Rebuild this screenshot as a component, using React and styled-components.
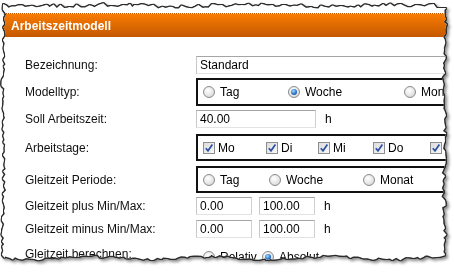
import React from 'react'
import styled, { createGlobalStyle } from 'styled-components'

// deterministic jitter so the torn edge is the same on every render
function seeded(seed) {
  let s = seed
  return () => {
    s = (s * 16807) % 2147483647
    return (s - 1) / 2147483646
  }
}

function tornPolygon() {
  const r = seeded(11)
  const pts = []
  for (let x = 3; x < 445; x += 2 + r() * 3) pts.push([x, 4 + r() * 4 + Math.sin(x / 23) * 0.8])
  for (let y = 8; y < 258; y += 2 + r() * 3) pts.push([446 - r() * 4 + Math.sin(y / 17) * 0.8, y])
  for (let x = 445; x > 4; x -= 2 + r() * 3) pts.push([x, 259 - r() * 3 + Math.sin(x / 19) * 1.6])
  for (let y = 258; y > 8; y -= 2 + r() * 3) pts.push([2 + r() * 4 + Math.sin(y / 21) * 0.8, y])
  return `polygon(${pts.map(([x, y]) => `${x.toFixed(1)}px ${y.toFixed(1)}px`).join(', ')})`
}

const TORN = tornPolygon()

const GlobalStyle = createGlobalStyle`
  html, body {
    margin: 0;
    padding: 0;
    background: #fff;
  }
  body {
    font-family: "Liberation Sans", Arial, sans-serif;
    font-size: 12px;
    color: #000;
  }
`

const Frame = styled.div`
  width: 454px;
  height: 273px;
  filter: drop-shadow(1px 0 0 #2b2b2b) drop-shadow(-1px 0 0 #2b2b2b)
    drop-shadow(0 1px 0 #2b2b2b) drop-shadow(0 -1px 0 #2b2b2b)
    drop-shadow(2px 2px 1.5px rgba(0, 0, 0, 0.45));
`

const Paper = styled.div`
  width: 454px;
  height: 273px;
  overflow: hidden;
  background: #fff;
  clip-path: ${TORN};
`

const TitleBar = styled.div`
  margin-top: 13px;
  height: 24px;
  box-sizing: border-box;
  border-top: 1px dotted #ffe2c4;
  background: linear-gradient(#f97b03, #c45800);
  color: #fff;
  font-weight: bold;
  font-size: 12px;
  padding-left: 11px;
  display: flex;
  align-items: center;
`

const Form = styled.div`
  padding: 19px 0 0 25px;
  display: flex;
  flex-direction: column;
`

const Row = styled.div`
  display: flex;
  align-items: center;
  height: ${({ $h }) => $h}px;
  margin-top: ${({ $gap }) => $gap || 0}px;
`

const Label = styled.div`
  width: 171px;
  flex: none;
  color: #111;
`

const Field = styled.input`
  box-sizing: border-box;
  height: 18px;
  width: ${({ $w }) => $w}px;
  flex: none;
  margin: 0 ${({ $mr }) => $mr || 0}px 0 0;
  padding: 0 0 0 3px;
  border: 1px solid;
  border-color: #a5a5a5 #d0d0d0 #e3e3e3 #c9c9c9;
  font-family: "Liberation Sans", Arial, sans-serif;
  font-size: 12px;
  color: #000;
  background: #fff;
  outline: none;
`

const Unit = styled.span`
  margin-left: 9px;
`

const Group = styled.div`
  box-sizing: border-box;
  width: 300px;
  height: 100%;
  flex: none;
  border: ${({ $plain }) => ($plain ? '2px solid transparent' : '2px solid #111')};
  padding-left: 5px;
  padding-top: ${({ $pt }) => $pt || 0}px;
  display: grid;
  grid-template-columns: ${({ $cols }) => $cols};
  align-items: center;
`

const Option = styled.label`
  display: flex;
  align-items: center;
  gap: ${({ $gap }) => $gap}px;
  white-space: nowrap;
`

const RadioDot = styled.span`
  box-sizing: border-box;
  width: 12px;
  height: 12px;
  border-radius: 50%;
  border: 1px solid #8a8a8a;
  background: radial-gradient(circle at 40% 35%, #ffffff 0%, #e6e6e6 55%, #c9c9c9 100%);
  display: flex;
  align-items: center;
  justify-content: center;

  &::after {
    content: '';
    display: ${({ $on }) => ($on ? 'block' : 'none')};
    width: 6px;
    height: 6px;
    border-radius: 50%;
    background: radial-gradient(circle at 40% 35%, #a6dcff 0%, #2a72c8 55%, #0d3f86 100%);
  }
`

const Box = styled.span`
  box-sizing: border-box;
  width: 12px;
  height: 12px;
  border: 1px solid #8e8f8f;
  background: linear-gradient(135deg, #dcdcdc, #f8f8f8);
  display: flex;
  align-items: center;
  justify-content: center;
`

function Radio({ on, children }) {
  return (
    <Option $gap={5}>
      <RadioDot $on={on} />
      {children}
    </Option>
  )
}

function Check({ children }) {
  return (
    <Option $gap={3}>
      <Box>
        <svg width='10' height='10' viewBox='0 0 10 10'>
          <path d='M1.8 5.2 L4 7.8 L8.4 1.6' fill='none' stroke='#2d4fa5' strokeWidth='1.7' />
        </svg>
      </Box>
      {children}
    </Option>
  )
}

export default function App() {
  return (
    <>
      <GlobalStyle />
      <Frame>
        <Paper>
          <TitleBar>Arbeitszeitmodell</TitleBar>
          <Form>
            <Row $h={18}>
              <Label>Bezeichnung:</Label>
              <Field $w={300} value='Standard' readOnly />
            </Row>
            <Row $h={28} $gap={4}>
              <Label>Modelltyp:</Label>
              <Group $cols='85px 116px auto'>
                <Radio>Tag</Radio>
                <Radio on>Woche</Radio>
                <Radio>Monat</Radio>
              </Group>
            </Row>
            <Row $h={18} $gap={4}>
              <Label>Soll Arbeitszeit:</Label>
              <Field $w={120} value='40.00' readOnly />
              <Unit>h</Unit>
            </Row>
            <Row $h={27} $gap={6}>
              <Label>Arbeitstage:</Label>
              <Group $cols='63px 52px 55px 57px auto'>
                <Check>Mo</Check>
                <Check>Di</Check>
                <Check>Mi</Check>
                <Check>Do</Check>
                <Check>Fr</Check>
              </Group>
            </Row>
            <Row $h={27} $gap={5}>
              <Label>Gleitzeit Periode:</Label>
              <Group $cols='66px 94px auto'>
                <Radio>Tag</Radio>
                <Radio>Woche</Radio>
                <Radio>Monat</Radio>
              </Group>
            </Row>
            <Row $h={18} $gap={4}>
              <Label>Gleitzeit plus Min/Max:</Label>
              <Field $w={56} $mr={7} value='0.00' readOnly />
              <Field $w={56} value='100.00' readOnly />
              <Unit>h</Unit>
            </Row>
            <Row $h={18} $gap={5}>
              <Label>Gleitzeit minus Min/Max:</Label>
              <Field $w={56} $mr={7} value='0.00' readOnly />
              <Field $w={56} value='100.00' readOnly />
              <Unit>h</Unit>
            </Row>
            <Row $h={20} $gap={6}>
              <Label>Gleitzeit berechnen:</Label>
              <Group $plain $pt={4} $cols='59px auto'>
                <Radio>Relativ</Radio>
                <Radio on>Absolut</Radio>
              </Group>
            </Row>
          </Form>
        </Paper>
      </Frame>
    </>
  )
}
